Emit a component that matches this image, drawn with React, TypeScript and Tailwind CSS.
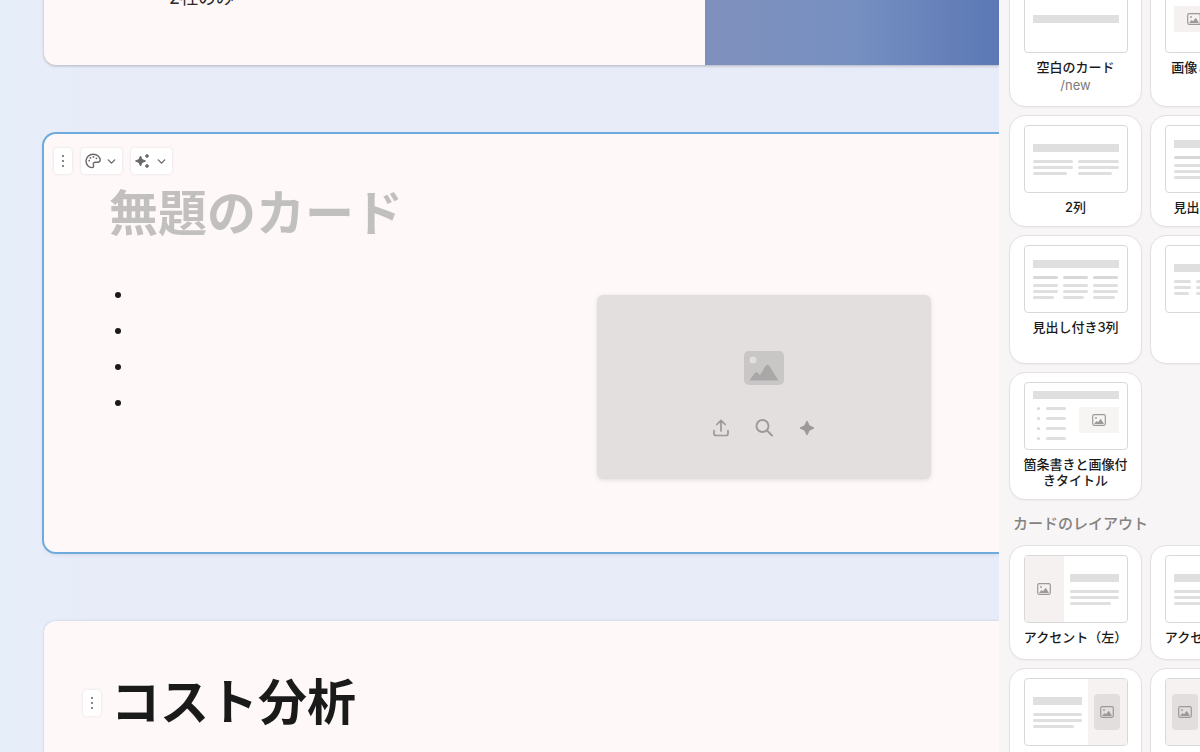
import type { ReactNode } from "react";
import { ChevronDown } from "lucide-react";

type ThumbKind = "blank" | "imageText" | "twoCol" | "twoColHead" | "threeCol" | "fourCol" | "bullets"
  | "accentLeft" | "accentRight" | "insetRight" | "insetLeft";

interface Template {
  kind: ThumbKind;
  label: string;
  shortcut?: string;
  minH?: string;
}

const BASIC: Template[] = [
  { kind: "blank", label: "空白のカード", shortcut: "/new", minH: "min-h-[132px]" },
  { kind: "imageText", label: "画像とテキスト" },
  { kind: "twoCol", label: "2列" },
  { kind: "twoColHead", label: "見出し付き2列" },
  { kind: "threeCol", label: "見出し付き3列", minH: "min-h-[129px]" },
  { kind: "fourCol", label: "4列" },
  { kind: "bullets", label: "箇条書きと画像付きタイトル" },
];

const LAYOUTS: Template[] = [
  { kind: "accentLeft", label: "アクセント（左）", minH: "min-h-[115px]" },
  { kind: "accentRight", label: "アクセント（右）" },
  { kind: "insetRight", label: "右" },
  { kind: "insetLeft", label: "左" },
];

/* ---------- icons ---------- */

function DotsIcon() {
  return (
    <svg viewBox="0 0 10 16" className="h-4 w-2.5" fill="currentColor">
      <circle cx="5" cy="3" r="1.1" />
      <circle cx="5" cy="8" r="1.1" />
      <circle cx="5" cy="13" r="1.1" />
    </svg>
  );
}

function PaletteIcon() {
  return (
    <svg viewBox="0 0 16 16" className="size-4" fill="none" stroke="currentColor" strokeWidth="1.4" strokeLinejoin="round">
      <path d="M8.2 1.2C4.2 1.2 1 4.2 1 8c0 3.700 2.800 6.600 6 6.600 1.400 0 1.900-1 1.500-2.100-.7-1.900.2-3.300 2-3.300h2.200c1.600 0 2.500-.7 2.500-2.100C15.200 3.800 12.200 1.200 8.200 1.200Z" />
      <g fill="currentColor" stroke="none">
        <circle cx="4.200" cy="7.700" r="0.9" />
        <circle cx="5.400" cy="4.900" r="0.9" />
        <circle cx="8.400" cy="3.900" r="0.9" />
        <circle cx="11.400" cy="5.300" r="0.9" />
      </g>
    </svg>
  );
}

function SparklesIcon() {
  return (
    <svg viewBox="0 0 16 16" className="size-4" fill="currentColor">
      <path d="M5.500 3 7 6.500 10.500 8 7 9.500 5.500 13 4 9.500.5 8 4 6.500Z" stroke="currentColor" strokeLinejoin="round" />
      <path d="M12 1v4M10 3h4M12 11v4M10 13h4" stroke="currentColor" strokeWidth="1.5" />
    </svg>
  );
}

function SparkIcon() {
  return (
    <svg viewBox="0 0 18 18" className="size-[18px]" fill="currentColor" stroke="currentColor" strokeLinejoin="round">
      <path d="M9 2 11.300 6.700 16 9 11.300 11.300 9 16 6.700 11.300 2 9 6.700 6.700Z" />
    </svg>
  );
}

function UploadIcon() {
  return (
    <svg viewBox="0 0 18 18" className="size-[18px]" fill="none" stroke="currentColor" strokeWidth="1.7" strokeLinecap="round" strokeLinejoin="round">
      <path d="M9 12V1.500M4.800 5.500 9 1.300l4.200 4.200M2 11.500v3c0 1.200.8 2 2 2h10c1.200 0 2-.8 2-2v-3" />
    </svg>
  );
}

function SearchIcon() {
  return (
    <svg viewBox="0 0 18 18" className="size-[18px]" fill="none" stroke="currentColor" strokeWidth="1.900" strokeLinecap="round">
      <circle cx="7.500" cy="7" r="6" />
      <path d="m12 11.500 5 5" />
    </svg>
  );
}

function PictureIcon() {
  return (
    <svg viewBox="0 0 40 34" className="h-[34px] w-10">
      <rect width="40" height="34" rx="5" fill="#c9c6c6" />
      <circle cx="9" cy="9" r="3.500" fill="#e4dfdf" />
      <path d="M5.500 29.500 10.500 22.500Q12.500 20 14.500 22.500L16 24 21 16Q23.500 11.500 26 16L34.500 29.500Z" fill="#a9a7a7" />
    </svg>
  );
}

function MiniImage() {
  return (
    <svg viewBox="0 0 14 12" className="h-3 w-3.5" fill="none" stroke="#9b9999" strokeWidth="1.200">
      <rect x="0.700" y="0.700" width="12.600" height="10.600" rx="1.500" />
      <circle cx="4" cy="4" r="0.900" fill="#9b9999" stroke="none" />
      <path d="M2 10 4.500 7 6 8.300 8.800 4.800 12 10Z" fill="#9b9999" stroke="none" />
    </svg>
  );
}

/* ---------- thumbnails ---------- */

function Bar() {
  return <div className="h-2 bg-[#e0dfdf]" />;
}

function Lines() {
  return (
    <div className="flex flex-1 flex-col gap-[3px]">
      <div className="h-[3px] rounded-sm bg-[#e0dfdf]" />
      <div className="h-[3px] rounded-sm bg-[#e0dfdf]" />
      <div className="mr-[15%] h-[3px] rounded-sm bg-[#e0dfdf]" />
    </div>
  );
}

function TextBlock({ pad }: { pad: string }) {
  return (
    <div className={`flex flex-1 flex-col justify-center gap-2 ${pad}`}>
      <Bar />
      <div className="flex"><Lines /></div>
    </div>
  );
}

function Columns({ count, heads }: { count: number; heads?: boolean }) {
  return (
    <div className="flex flex-1 flex-col justify-center gap-2 px-2">
      <Bar />
      <div className="flex gap-[5px]">
        {Array.from({ length: count }, (_, i) => (
          <div key={i} className="flex flex-1 flex-col gap-[5px]">
            {heads && <div className="h-[3px] rounded-sm bg-[#d9d8d8]" />}
            <Lines />
          </div>
        ))}
      </div>
    </div>
  );
}

function AccentPanel() {
  return <div className="flex w-[39px] items-center justify-center bg-[#f4f1f0]"><MiniImage /></div>;
}

function InsetPanel() {
  return (
    <div className="flex w-[39px] items-center justify-center bg-[#f5f2f1]">
      <div className="flex h-9 w-[26px] items-center justify-center rounded-sm bg-[#e1dedd]"><MiniImage /></div>
    </div>
  );
}

const THUMBS: Record<ThumbKind, ReactNode> = {
  blank: <div className="flex flex-1 flex-col justify-center px-2"><Bar /></div>,
  imageText: (
    <div className="flex flex-1 items-center gap-2 px-2">
      <div className="flex h-[26px] w-10 items-center justify-center bg-[#f4f1f0]"><MiniImage /></div>
      <div className="flex flex-1"><Lines /></div>
    </div>
  ),
  twoCol: <Columns count={2} />,
  twoColHead: <Columns count={2} heads />,
  threeCol: <Columns count={3} heads />,
  fourCol: <Columns count={4} />,
  bullets: (
    <div className="flex flex-1 flex-col gap-2 px-2 pt-2">
      <Bar />
      <div className="flex justify-between">
        <div className="flex flex-col gap-[7px] pl-1">
          {[0, 1, 2, 3].map(i => (
            <div key={i} className="flex items-center gap-1.5">
              <div className="size-[3px] rounded-full bg-[#d9d8d8]" />
              <div className="h-[3px] w-5 rounded-sm bg-[#e0dfdf]" />
            </div>
          ))}
        </div>
        <div className="flex h-[26px] w-10 items-center justify-center bg-[#f7f5f4]"><MiniImage /></div>
      </div>
    </div>
  ),
  accentLeft: <><AccentPanel /><TextBlock pad="pl-1.5 pr-2" /></>,
  accentRight: <><TextBlock pad="pl-2 pr-1.5" /><AccentPanel /></>,
  insetRight: <><TextBlock pad="pl-2 pr-1.5" /><InsetPanel /></>,
  insetLeft: <><InsetPanel /><TextBlock pad="pl-1.5 pr-2" /></>,
};

function TemplateTile({ item }: { item: Template }) {
  return (
    <button
      className={`flex flex-col items-center rounded-2xl border border-[#e3e1e1] bg-white pt-[9px] pb-[11px] shadow-[0_1px_2px_rgba(0,0,0,0.04)] ${item.minH ?? ""}`}
    >
      <div className="flex h-[68px] w-[104px] shrink-0 overflow-hidden rounded-sm border border-[#d9d8d8] bg-white">
        {THUMBS[item.kind]}
      </div>
      <span className="mt-1.5 w-[104px] text-[13px] leading-4 font-medium text-[#1b1a1a]">{item.label}</span>
      {item.shortcut && <span className="mt-0.5 text-[13px] leading-4 text-[#7b7979]">{item.shortcut}</span>}
    </button>
  );
}

/* ---------- canvas ---------- */

function ToolButton({ label, children }: { label: string; children: ReactNode }) {
  return (
    <button aria-label={label} className="flex h-[26px] items-center gap-1 rounded-sm bg-white px-1 text-[#6b6868] shadow-[0_0_3px_rgba(0,0,0,0.12)]">
      {children}
    </button>
  );
}

export default function App() {
  return (
    <div className="flex h-screen overflow-hidden bg-[#e8edf9] font-[Inter,'Noto_Sans_CJK_JP',sans-serif]">
      <main className="min-w-0 flex-1 overflow-hidden bg-linear-to-r from-[#e6eef9] to-[#e8ecf9] to-10% pl-11">
        {/* scrolled part-way into the first card */}
        <div className="-mt-5 flex flex-col gap-[69px]">
          <section className="flex h-[85px] rounded-bl-xl bg-[#fef9f8] shadow-[0_1px_3px_rgba(0,0,0,0.25)]">
            <p className="flex-1 pt-1 pl-[125px] text-lg leading-7 text-[#2b2929]">2社のみ</p>
            <div role="img" aria-label="カードの画像" className="w-[294px] bg-linear-to-r from-[#8090bd] via-[#7690c1] to-[#5c78b5]" />
          </section>

          <section className="h-[418px] rounded-l-xl bg-[#fef9f8] pt-3.5 shadow-[0_2px_5px_rgba(0,0,0,0.12)] ring-2 ring-[#6eaade]">
            <div className="flex gap-[9px] pl-2.5">
              <ToolButton label="カードのメニュー"><DotsIcon /></ToolButton>
              <ToolButton label="カードのスタイル"><PaletteIcon /><ChevronDown size={13} strokeWidth={2.5} /></ToolButton>
              <ToolButton label="AIで編集"><SparklesIcon /><ChevronDown size={13} strokeWidth={2.5} /></ToolButton>
            </div>
            <div className="pt-2.5 pr-[68px] pl-[65px]">
              <h2 className="text-[49px] leading-[60px] font-bold text-[#c2bfbf]">無題のカード</h2>
              <div className="mt-[33px] flex justify-between">
                <ul className="pl-1.5">
                  {[0, 1, 2, 3].map(i => (
                    <li key={i} className="flex h-9 items-center"><span className="size-1.5 rounded-full bg-[#1b1a1a]" /></li>
                  ))}
                </ul>
                <div className="mt-[18px] flex h-[184px] w-[334px] flex-col items-center rounded-md bg-[#e4dfdf] pt-14 text-[#9c9999] shadow-[0_1px_4px_rgba(0,0,0,0.12)]">
                  <PictureIcon />
                  <div className="mt-[34px] flex gap-[25px]">
                    <button aria-label="アップロード"><UploadIcon /></button>
                    <button aria-label="検索"><SearchIcon /></button>
                    <button aria-label="AIで生成"><SparkIcon /></button>
                  </div>
                </div>
              </div>
            </div>
          </section>

          <section className="flex h-[200px] items-start rounded-tl-xl bg-[#fef9f8] pt-[52px] pl-[39px] shadow-[0_0_3px_rgba(0,0,0,0.15)]">
            <div className="flex items-center gap-2.5">
              <ToolButton label="ブロックのメニュー"><DotsIcon /></ToolButton>
              <h2 className="text-[49px] leading-[60px] font-bold text-[#1b1a1a]">コスト分析</h2>
            </div>
          </section>
        </div>
      </main>

      <aside className="w-[201px] shrink-0 overflow-hidden bg-[#f7f5f6] pl-2.5">
        <div className="-mt-[25px]">
          <div className="grid grid-cols-[133px_133px] gap-2">
            {BASIC.map(item => <TemplateTile key={item.kind} item={item} />)}
          </div>
          <h3 className="mt-[13px] mb-2.5 pl-1 text-[15px] leading-[22px] font-medium whitespace-nowrap text-[#858282]">カードのレイアウト</h3>
          <div className="grid grid-cols-[133px_133px] gap-2">
            {LAYOUTS.map(item => <TemplateTile key={item.kind} item={item} />)}
          </div>
        </div>
      </aside>
    </div>
  );
}
